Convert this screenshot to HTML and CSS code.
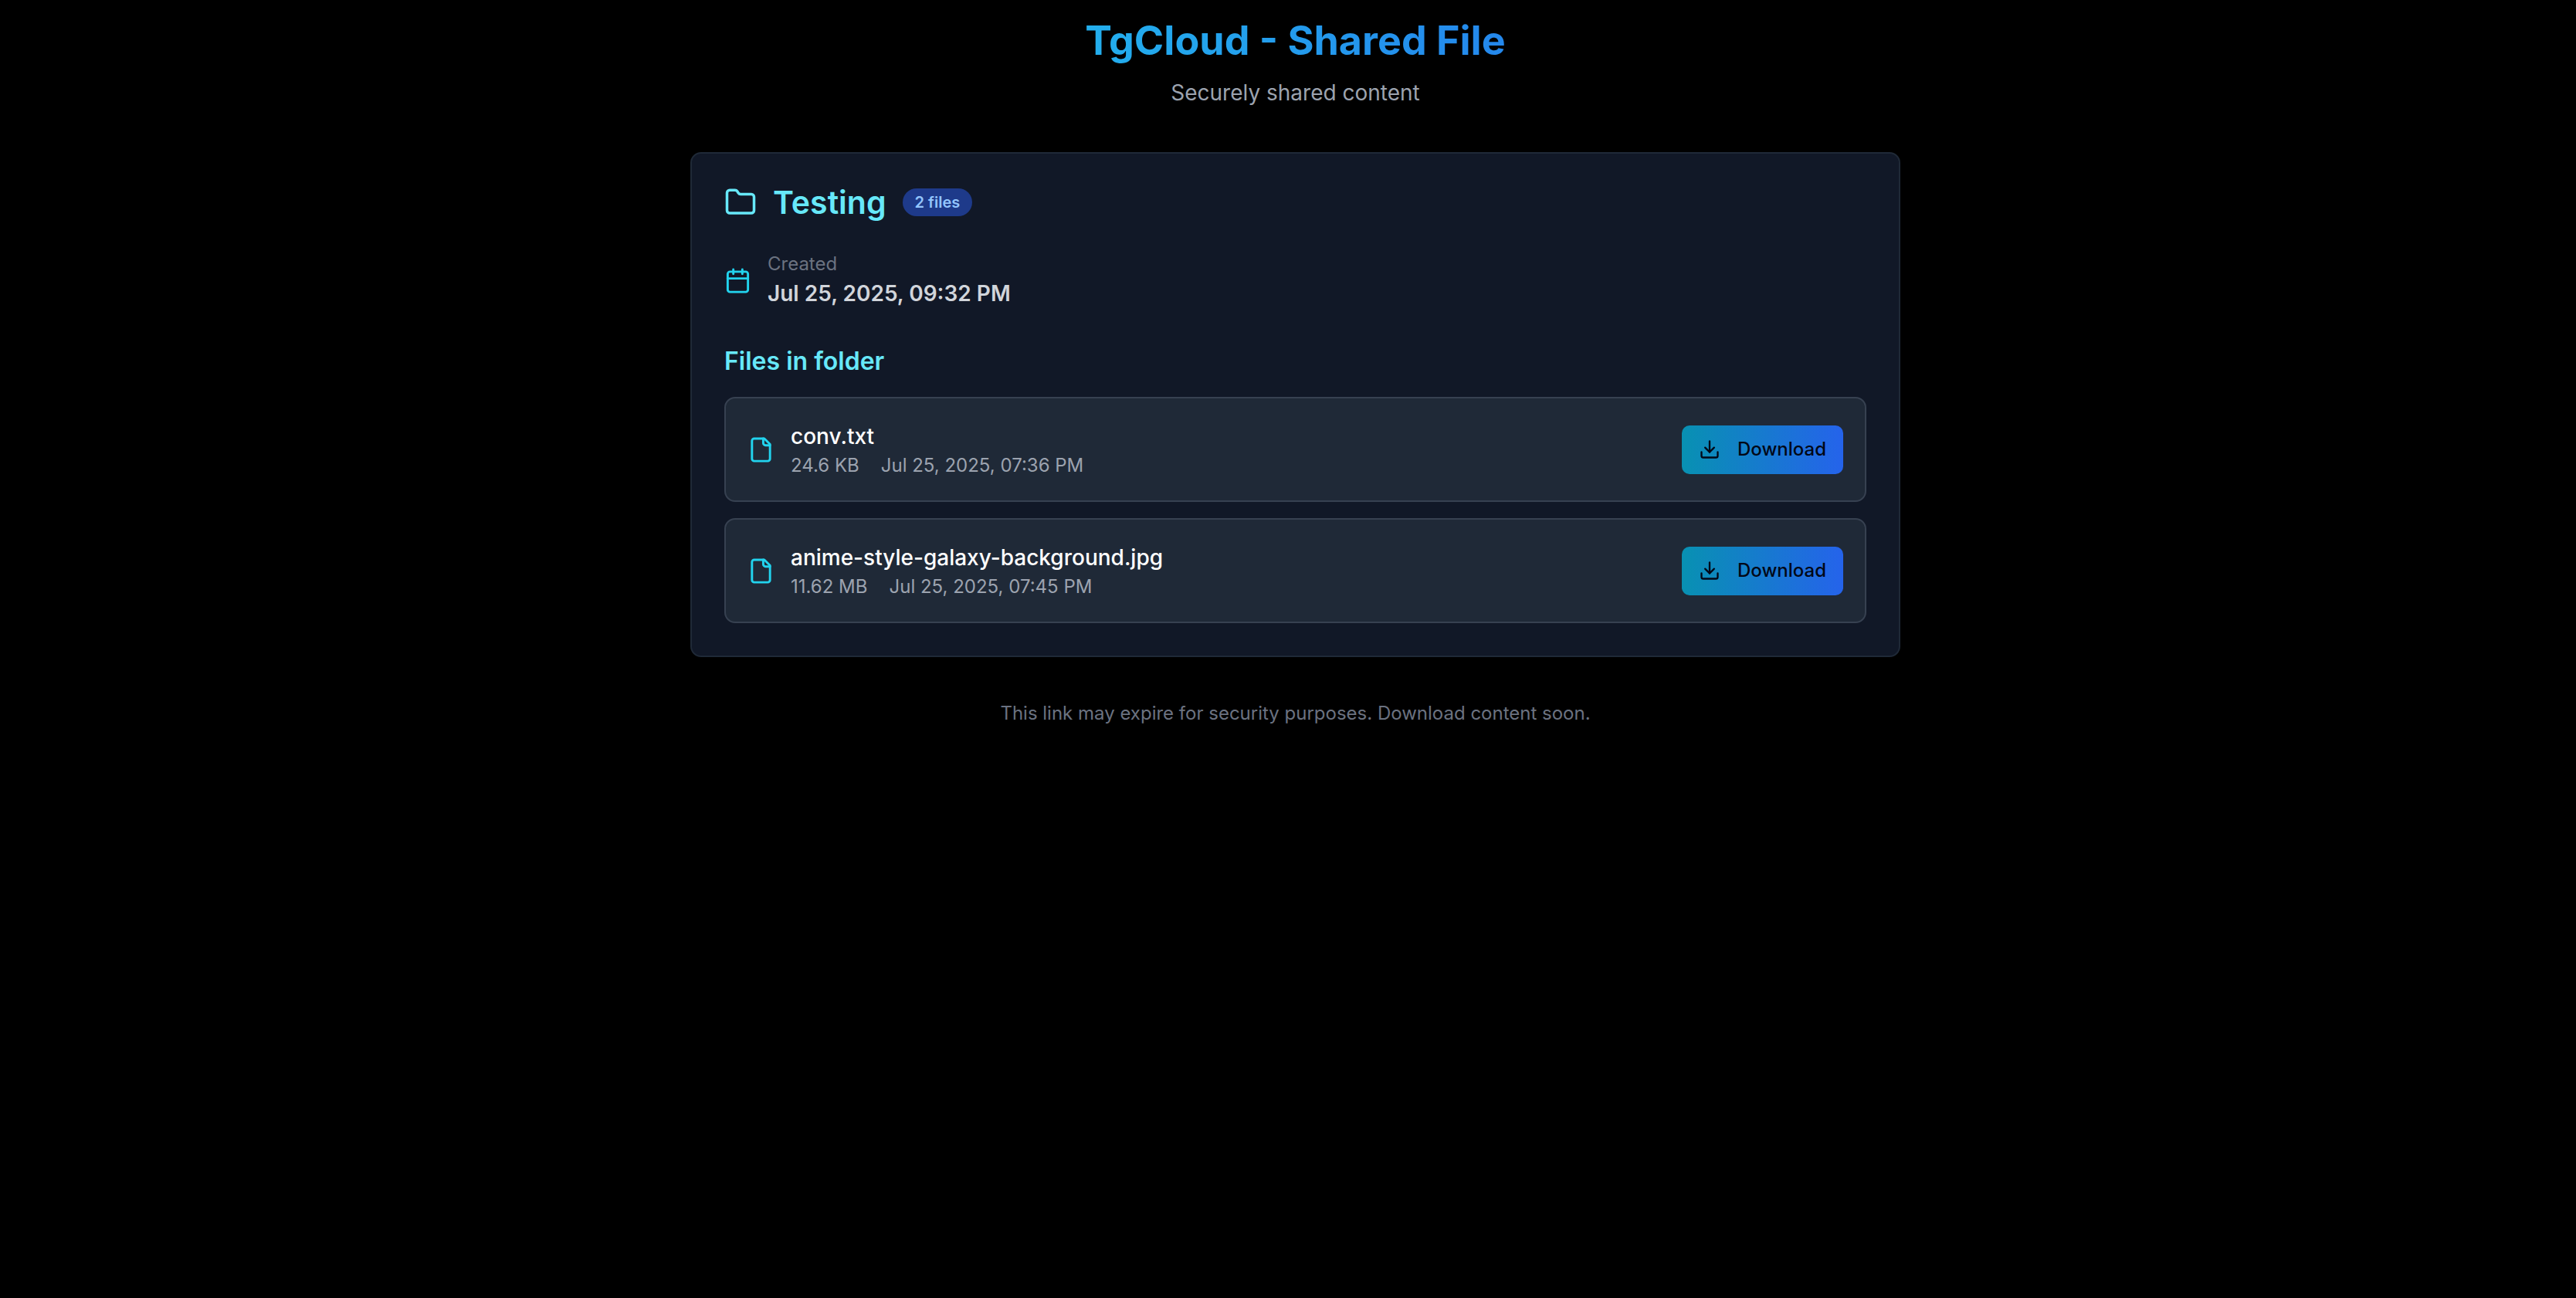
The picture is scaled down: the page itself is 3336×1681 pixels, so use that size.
FILE: index.html
```html
<!DOCTYPE html>
<html lang="en">
<head>
<meta charset="utf-8">
<meta name="viewport" content="width=device-width, initial-scale=1">
<title>TgCloud - Shared File</title>
<link rel="stylesheet" href="styles.css">
</head>
<body>
<svg class="sprite" aria-hidden="true">
  <symbol id="icon-file" viewBox="0 0 24 24"><path d="M15 2H6a2 2 0 0 0-2 2v16a2 2 0 0 0 2 2h12a2 2 0 0 0 2-2V7Z"/><path d="M14 2v4a2 2 0 0 0 2 2h4"/></symbol>
  <symbol id="icon-download" viewBox="0 0 24 24"><path d="M21 15v4a2 2 0 0 1-2 2H5a2 2 0 0 1-2-2v-4"/><path d="m7 10 5 5 5-5"/><path d="M12 15V3"/></symbol>
</svg>
<div class="page">
  <header class="header">
    <h1 class="title">TgCloud - Shared File</h1>
    <p class="subtitle">Securely shared content</p>
  </header>
  <main class="card">
    <div class="card-head">
      <svg class="icon icon-lg" viewBox="0 0 24 24" aria-hidden="true"><path d="M20 20a2 2 0 0 0 2-2V8a2 2 0 0 0-2-2h-7.900a2 2 0 0 1-1.690-.9L9.600 3.900A2 2 0 0 0 7.930 3H4a2 2 0 0 0-2 2v13a2 2 0 0 0 2 2Z"/></svg>
      <h2 class="folder-name">Testing</h2>
      <span class="badge">2 files</span>
    </div>
    <div class="created">
      <svg class="icon" viewBox="0 0 24 24" aria-hidden="true"><path d="M8 2v4"/><path d="M16 2v4"/><rect width="18" height="18" x="3" y="4" rx="2"/><path d="M3 10h18"/></svg>
      <div>
        <p class="label">Created</p>
        <p class="date">Jul 25, 2025, 09:32 PM</p>
      </div>
    </div>
    <h3 class="section-title">Files in folder</h3>
    <ul class="files">
      <li class="file">
        <svg class="icon" aria-hidden="true"><use href="#icon-file"/></svg>
        <div class="file-info">
          <p class="file-name">conv.txt</p>
          <p class="meta"><span>24.6 KB</span><span>Jul 25, 2025, 07:36 PM</span></p>
        </div>
        <button class="download" type="button"><svg class="icon icon-sm" aria-hidden="true"><use href="#icon-download"/></svg>Download</button>
      </li>
      <li class="file">
        <svg class="icon" aria-hidden="true"><use href="#icon-file"/></svg>
        <div class="file-info">
          <p class="file-name">anime-style-galaxy-background.jpg</p>
          <p class="meta"><span>11.62 MB</span><span>Jul 25, 2025, 07:45 PM</span></p>
        </div>
        <button class="download" type="button"><svg class="icon icon-sm" aria-hidden="true"><use href="#icon-download"/></svg>Download</button>
      </li>
    </ul>
  </main>
  <footer class="footer">This link may expire for security purposes. Download content soon.</footer>
</div>
</body>
</html>
```

FILE: styles.css
```css
* { box-sizing: border-box; }

body {
  margin: 0;
  padding-left: 19px;
  background: #000;
  color: #fff;
  font-family: Inter, "Liberation Sans", sans-serif;
  font-size: 28px;
  line-height: 42px;
}

h1, h2, h3, p, ul { margin: 0; padding: 0; }

.sprite { position: absolute; width: 0; height: 0; }

.page {
  max-width: 1567px;
  margin: 0 auto;
  padding: 21px 0 56px;
}

.header { margin-bottom: 56px; text-align: center; }

.title {
  margin-bottom: 14px;
  font-size: 52px;
  font-weight: 700;
  line-height: 64px;
  color: transparent;
  background: linear-gradient(to right, #22d3ee, #2563eb);
  background-clip: text;
}

.subtitle { color: #9ca3af; }

.card {
  padding: 42px;
  border: 2px solid #1f2937;
  border-radius: 14px;
  background: #111827;
}

.icon {
  flex: none;
  width: 35px;
  height: 35px;
  fill: none;
  stroke: currentColor;
  stroke-width: 2;
  stroke-linecap: round;
  stroke-linejoin: round;
  color: #22d3ee;
}

.icon-lg { width: 42px; height: 42px; color: inherit; }
.icon-sm { width: 28px; height: 28px; color: inherit; }

.card-head {
  display: flex;
  align-items: center;
  gap: 21px;
  margin-bottom: 42px;
  color: #67e8f9;
}

.folder-name { font-size: 41px; font-weight: 600; line-height: 42px; }

.badge {
  padding: 4px 16px;
  border-radius: 18px;
  background: #1e3a8a;
  color: #93c5fd;
  font-size: 20px;
  font-weight: 600;
  line-height: 28px;
}

.created {
  display: flex;
  align-items: center;
  gap: 21px;
  margin-bottom: 42px;
}

.label { color: #6b7280; font-size: 24px; line-height: 34px; }
.date { color: #d1d5db; font-weight: 600; }

.section-title {
  margin-bottom: 21px;
  color: #67e8f9;
  font-size: 32px;
  font-weight: 600;
  line-height: 50px;
}

.files { display: flex; flex-direction: column; gap: 21px; list-style: none; }

.file {
  display: flex;
  align-items: center;
  gap: 21px;
  padding: 28px;
  border: 2px solid #374151;
  border-radius: 14px;
  background: #1f2937;
}

.file-info { flex: 1; }
.file-name { font-weight: 500; }
.meta { display: flex; gap: 28px; color: #9ca3af; font-size: 24px; line-height: 34px; }

.download {
  display: flex;
  align-items: center;
  gap: 22px;
  height: 63px;
  padding: 0 22px;
  border: 0;
  border-radius: 10px;
  background: linear-gradient(to right, #0891b2, #2563eb);
  color: #020817;
  font: 500 24px/34px Inter, "Liberation Sans", sans-serif;
}

.footer {
  margin-top: 56px;
  color: #6b7280;
  font-size: 24px;
  line-height: 34px;
  text-align: center;
}
```
